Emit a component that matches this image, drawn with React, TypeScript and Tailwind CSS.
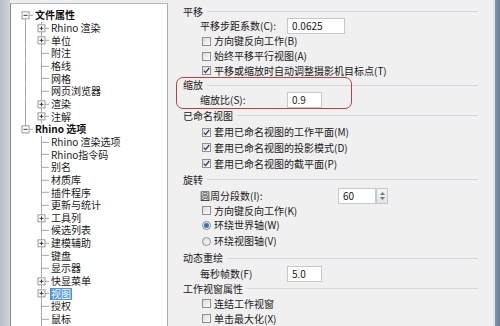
import React from "react";

const FONT = { fontFamily: '"Noto Sans CJK SC", "Noto Sans", sans-serif' };

type TreeRow = { label: string; level: 0 | 1; kind: "root" | "plus" | "leaf"; underRoot1?: boolean; selected?: boolean };

const tree: TreeRow[] = [
  { label: "文件属性", level: 0, kind: "root" },
  { label: "Rhino 渲染", level: 1, kind: "plus", underRoot1: true },
  { label: "单位", level: 1, kind: "plus", underRoot1: true },
  { label: "附注", level: 1, kind: "leaf", underRoot1: true },
  { label: "格线", level: 1, kind: "leaf", underRoot1: true },
  { label: "网格", level: 1, kind: "leaf", underRoot1: true },
  { label: "网页浏览器", level: 1, kind: "leaf", underRoot1: true },
  { label: "渲染", level: 1, kind: "plus", underRoot1: true },
  { label: "注解", level: 1, kind: "plus", underRoot1: true },
  { label: "Rhino 选项", level: 0, kind: "root" },
  { label: "Rhino 渲染选项", level: 1, kind: "leaf" },
  { label: "Rhino指令码", level: 1, kind: "leaf" },
  { label: "别名", level: 1, kind: "leaf" },
  { label: "材质库", level: 1, kind: "leaf" },
  { label: "插件程序", level: 1, kind: "leaf" },
  { label: "更新与统计", level: 1, kind: "leaf" },
  { label: "工具列", level: 1, kind: "plus" },
  { label: "候选列表", level: 1, kind: "leaf" },
  { label: "建模辅助", level: 1, kind: "plus" },
  { label: "键盘", level: 1, kind: "leaf" },
  { label: "显示器", level: 1, kind: "leaf" },
  { label: "快显菜单", level: 1, kind: "plus" },
  { label: "视图", level: 1, kind: "plus", selected: true },
  { label: "授权", level: 1, kind: "leaf" },
  { label: "鼠标", level: 1, kind: "leaf" },
  { label: "", level: 1, kind: "leaf" },
];

const LINE = "#a7a7a7";

function Box({ cx, minus }: { cx: number; minus: boolean }) {
  const cy = 6.33;
  return (
    <g>
      <rect x={cx - 3.5} y={cy - 3.5} width={7} height={7} fill="#fff" stroke="#9a9a9a" strokeWidth={1} />
      <line x1={cx - 2} y1={cy} x2={cx + 2} y2={cy} stroke="#3a3a3a" strokeWidth={1} />
      {!minus && <line x1={cx} y1={cy - 2} x2={cx} y2={cy + 2} stroke="#3a3a3a" strokeWidth={1} />}
    </g>
  );
}

function TreeItem({ row, index }: { row: TreeRow; index: number }) {
  const h = 12.67;
  if (row.level === 0) {
    const first = index === 0;
    return (
      <div className="flex items-center h-[12.67px]">
        <svg width={24} height={h} className="shrink-0">
          {first ? (
            <line x1={14.5} y1={h / 2} x2={14.5} y2={h} stroke={LINE} />
          ) : (
            <line x1={14.5} y1={0} x2={14.5} y2={h / 2} stroke={LINE} />
          )}
          <line x1={14.5} y1={h / 2} x2={22} y2={h / 2} stroke={LINE} />
          <Box cx={14.5} minus />
        </svg>
        <span className="text-[10px] font-bold leading-none text-[#111]">{row.label}</span>
      </div>
    );
  }
  return (
    <div className="flex items-center h-[12.67px]">
      <svg width={39} height={h} className="shrink-0">
        {row.underRoot1 && <line x1={14.5} y1={0} x2={14.5} y2={h} stroke={LINE} />}
        <line x1={30.5} y1={0} x2={30.5} y2={h} stroke={LINE} />
        <line x1={30.5} y1={h / 2} x2={38} y2={h / 2} stroke={LINE} />
        {row.kind === "plus" && <Box cx={30.5} minus={false} />}
      </svg>
      {row.selected ? (
        <span className="text-[10px] leading-none text-white bg-[#4b93dc] px-[1px] py-[1px]">{row.label}</span>
      ) : (
        <span className="text-[10px] leading-none text-[#1a1a1a] pl-[1px]">{row.label}</span>
      )}
    </div>
  );
}

function Check({ checked }: { checked?: boolean }) {
  return (
    <span className="w-[9px] h-[9px] shrink-0 border border-[#8e8f8f] bg-gradient-to-br from-[#dcdcdc] to-[#fbfbfb] flex items-center justify-center">
      {checked && (
        <svg width={7} height={7} viewBox="0 0 7 7">
          <path d="M0.8 3.6 L2.6 5.6 L6.2 1" fill="none" stroke="#2a3f66" strokeWidth={1.3} />
        </svg>
      )}
    </span>
  );
}

function Radio({ checked }: { checked?: boolean }) {
  return (
    <span className="w-[9px] h-[9px] shrink-0 rounded-full border border-[#8e8f8f] bg-gradient-to-br from-[#dedede] to-[#fbfbfb] flex items-center justify-center">
      {checked && <span className="w-[5px] h-[5px] rounded-full bg-[#3c72b8]" />}
    </span>
  );
}

function Header({ title, h }: { title: string; h: string }) {
  return (
    <div className={`flex items-center gap-[4px] ${h}`}>
      <span className="text-[10px] leading-none text-[#1a1a1a] whitespace-nowrap">{title}</span>
      <span className="flex-1 h-px bg-[#d3d8dd]" />
    </div>
  );
}

function CheckRow({ label, checked, h }: { label: string; checked?: boolean; h: string }) {
  return (
    <div className={`flex items-center pl-[19px] gap-[3px] ${h}`}>
      <Check checked={checked} />
      <span className="text-[10px] leading-none text-[#1a1a1a] whitespace-nowrap">{label}</span>
    </div>
  );
}

function RadioRow({ label, checked, h }: { label: string; checked?: boolean; h: string }) {
  return (
    <div className={`flex items-center pl-[19px] gap-[3px] ${h}`}>
      <Radio checked={checked} />
      <span className="text-[10px] leading-none text-[#1a1a1a] whitespace-nowrap">{label}</span>
    </div>
  );
}

function InputRow({ label, value, labelW, inputW, h }: { label: string; value: string; labelW: string; inputW: string; h: string }) {
  return (
    <div className={`flex items-center pl-[17px] ${h}`}>
      <span className={`text-[10px] leading-none text-[#1a1a1a] whitespace-nowrap ${labelW}`}>{label}</span>
      <span className={`h-[16px] ${inputW} bg-white border border-[#c5c9ce] flex items-center pl-[4px] text-[10px] leading-none text-[#1a1a1a]`}>
        {value}
      </span>
    </div>
  );
}

export default function App() {
  return (
    <div className="w-[500px] h-[326px] overflow-hidden flex bg-[#f0f0f0]" style={FONT}>
      {/* left gray strip */}
      <div className="w-[10px] h-full bg-gradient-to-r from-[#b9bec4] to-[#d3d6da] shrink-0" />
      {/* tree panel */}
      <div className="w-[158px] shrink-0 flex flex-col pt-[3px] bg-[#eceef0]">
        <div className="flex-1 bg-white border-l border-t border-r border-l-[#858a91] border-t-[#b6b9bd] border-r-[#a9acb0] pt-[5px] flex flex-col">
          {tree.map((r, i) => (
            <TreeItem key={i} row={r} index={i} />
          ))}
        </div>
      </div>
      {/* options */}
      <div className="flex-1 pl-[15px] pr-[15px] pt-[5.5px] flex flex-col">
        <Header title="平移" h="h-[13px]" />
        <InputRow label="平移步距系数(C):" value="0.0625" labelW="w-[87px]" inputW="w-[58px]" h="h-[15px]" />
        <CheckRow label="方向键反向工作(B)" h="h-[15.5px]" />
        <CheckRow label="始终平移平行视图(A)" h="h-[15px]" />
        <CheckRow label="平移或缩放时自动调整摄影机目标点(T)" checked h="h-[15px]" />
        <div className="relative flex flex-col">
          <Header title="缩放" h="h-[13.5px]" />
          <InputRow label="缩放比(S):" value="0.9" labelW="w-[87px]" inputW="w-[35px]" h="h-[15.5px]" />
          <div className="absolute left-[-7px] top-[-1.5px] w-[176px] h-[32px] rounded-[7px] border-[1.5px] border-[#c0403f]" />
        </div>
        <Header title="已命名视图" h="h-[17px]" />
        <CheckRow label="套用已命名视图的工作平面(M)" checked h="h-[16px]" />
        <CheckRow label="套用已命名视图的投影模式(D)" checked h="h-[15.5px]" />
        <CheckRow label="套用已命名视图的截平面(P)" checked h="h-[16.5px]" />
        <Header title="旋转" h="h-[16.5px]" />
        <div className="flex items-center pl-[17px] h-[15px]">
          <span className="text-[10px] leading-none text-[#1a1a1a] whitespace-nowrap w-[138px]">圆周分段数(I):</span>
          <span className="h-[16px] w-[38px] bg-white border border-[#c5c9ce] flex items-center pl-[4px] text-[10px] leading-none text-[#1a1a1a]">
            60
          </span>
          <span className="h-[16px] w-[12px] border border-[#c5c9ce] bg-gradient-to-b from-[#f4f4f4] to-[#e2e2e2] flex flex-col items-center justify-center gap-[2px]">
            <svg width={5} height={3} viewBox="0 0 5 3"><path d="M0 3 L2.5 0 L5 3Z" fill="#6a7b90" /></svg>
            <svg width={5} height={3} viewBox="0 0 5 3"><path d="M0 0 L2.5 3 L5 0Z" fill="#6a7b90" /></svg>
          </span>
        </div>
        <CheckRow label="方向键反向工作(K)" h="h-[15px]" />
        <RadioRow label="环绕世界轴(W)" checked h="h-[15px]" />
        <RadioRow label="环绕视图轴(V)" h="h-[17px]" />
        <Header title="动态重绘" h="h-[17px]" />
        <InputRow label="每秒帧数(F)" value="5.0" labelW="w-[87px]" inputW="w-[35px]" h="h-[15px]" />
        <Header title="工作视窗属性" h="h-[15px]" />
        <CheckRow label="连结工作视窗" h="h-[15px]" />
        <CheckRow label="单击最大化(X)" h="h-[15px]" />
      </div>
      {/* right edge */}
      <div className="w-[2px] h-full bg-[#dfe6ee] shrink-0" />
      <div className="w-[5px] h-full bg-gradient-to-r from-[#8293a8] to-[#6d7f94] shrink-0" />
    </div>
  );
}
